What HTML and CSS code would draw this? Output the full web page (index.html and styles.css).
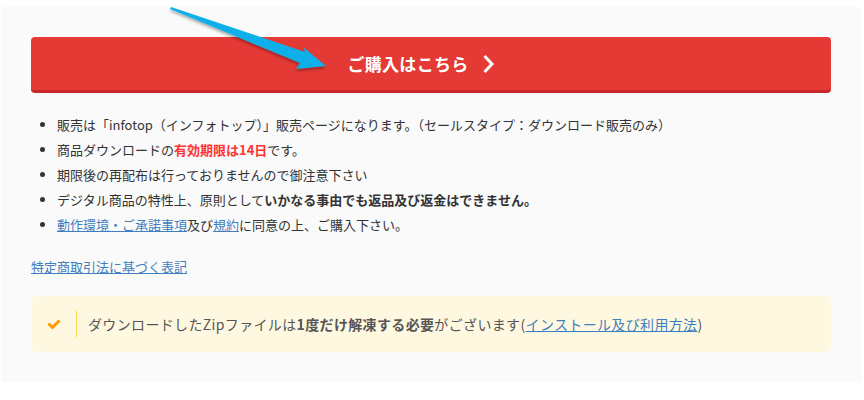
FILE: index.html
```html
<!DOCTYPE html>
<html lang="ja">
<head>
    <meta charset="UTF-8">
    <meta name="viewport" content="width=device-width, initial-scale=1.0">
    <title>ご購入はこちら</title>
    <link rel="stylesheet" href="styles.css">
</head>
<body>
    <div class="panel">
        <!-- 矢印 (ボタンの上に重ねる) -->
        <svg class="arrow" width="200" height="90" viewBox="0 0 200 90">
            <defs>
                <filter id="kage" x="-20%" y="-20%" width="140%" height="160%">
                    <feDropShadow dx="0" dy="2" stdDeviation="1.6" flood-color="#000" flood-opacity="0.35"/>
                </filter>
            </defs>
            <polygon filter="url(#kage)" fill="#0cb0e8"
                points="9,0 143,45 141,40 164,59 134,62 138,56 8,2"/>
        </svg>

        <a class="buy-btn" href="#">
            ご購入はこちら
            <svg class="chev" width="13" height="20" viewBox="0 0 13 20">
                <polyline points="2.5,2 10,10 2.5,18" fill="none" stroke="#fff" stroke-width="3"/>
            </svg>
        </a>

        <ul class="notes">
            <li>販売は「infotop（インフォトップ）」販売ページになります。（セールスタイプ：ダウンロード販売のみ）</li>
            <li>商品ダウンロードの<span class="red">有効期限は14日</span>です。</li>
            <li>期限後の再配布は行っておりませんので御注意下さい</li>
            <li>デジタル商品の特性上、原則として<b>いかなる事由でも返品及び返金はできません。</b></li>
            <li><a href="#">動作環境・ご承諾事項</a>及び<a href="#">規約</a>に同意の上、ご購入下さい。</li>
        </ul>

        <p class="law"><a href="#">特定商取引法に基づく表記</a></p>

        <div class="notice">
            <svg class="check" width="14" height="12" viewBox="0 0 14 12">
                <polyline points="1.5,5.5 5.5,9.5 12.5,2.5" fill="none" stroke="#ff9800" stroke-width="3"/>
            </svg>
            <span class="bar"></span>
            <p>ダウンロードしたZipファイルは<b>1度だけ解凍する必要</b>がございます(<a href="#">インストール及び利用方法</a>)</p>
        </div>
    </div>
</body>
</html>
```

FILE: styles.css
```css
body {
    margin: 0;
    background-color: #fff;
    font-family: "Noto Sans CJK JP", "Noto Sans", sans-serif;
    color: #333;
}
.panel {
    position: relative;
    background-color: #fafafa;
    margin: 7px 0 0 1px;
    width: 860px;
    height: 375px;
    padding: 30px 30px 0 30px;
    box-sizing: border-box;
}
.arrow {
    position: absolute;
    left: 161px;
    top: 0;
}
.buy-btn {
    display: flex;
    align-items: center;
    justify-content: center;
    gap: 13px;
    width: 800px;
    height: 56px;
    padding-right: 20px;
    box-sizing: border-box;
    background-color: #e53935;
    border-bottom: 3px solid #c62828;
    border-radius: 4px;
    color: #fff;
    font-size: 17px;
    font-weight: bold;
    text-decoration: none;
    letter-spacing: 0.3px;
}
.chev {
    margin-top: 1px;
}
.notes {
    margin: 19px 0 0 0;
    padding-left: 26px;
    font-size: 13px;
    line-height: 25px;
}
a {
    color: #3f7fbf;
}
.red {
    color: #ff3333;
    font-weight: bold;
}
.law {
    margin: 17px 0 0 0;
    font-size: 13px;
    line-height: 25px;
}
.notice {
    display: flex;
    align-items: center;
    margin-top: 17px;
    width: 800px;
    height: 56px;
    background-color: #fff8e1;
    border-radius: 5px;
    padding-left: 16px;
    box-sizing: border-box;
}
.bar {
    width: 1px;
    height: 26px;
    background-color: #ffd54f;
    margin: 0 11px 0 15px;
}
.notice p {
    margin: 0;
    font-size: 14px;
    letter-spacing: 0.35px;
    color: #555;
}
```
